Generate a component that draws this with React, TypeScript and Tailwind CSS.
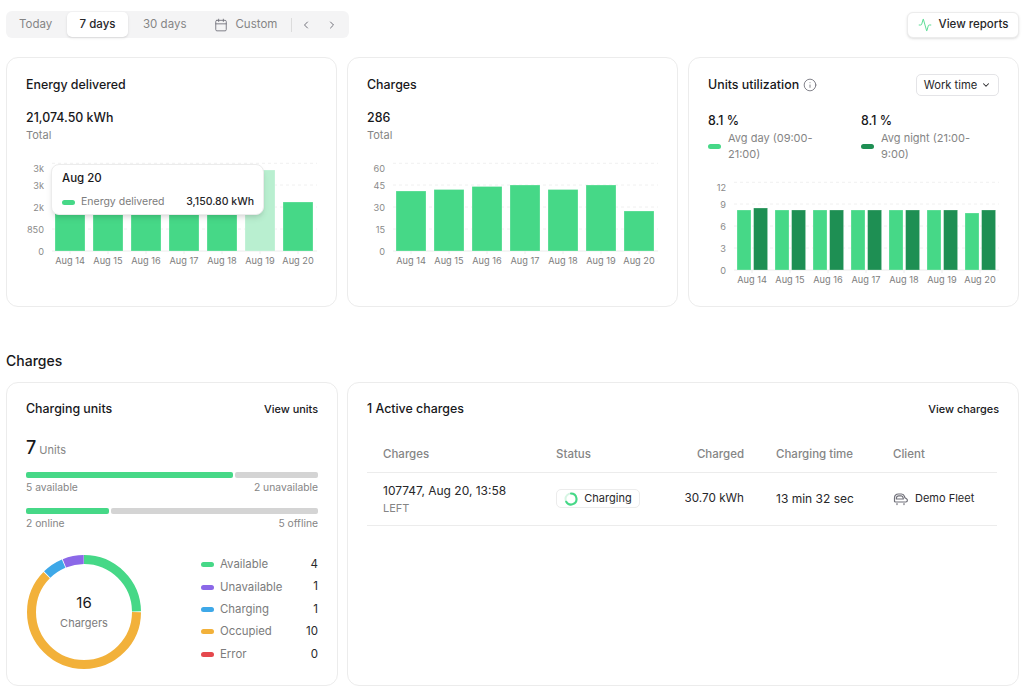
import { Activity, Calendar, ChevronDown, ChevronLeft, ChevronRight, Info } from "lucide-react";
import type { ReactNode } from "react";

const GREEN = "#46d887";
const DARK = "#1e8f53";
const DAYS = ["Aug 14", "Aug 15", "Aug 16", "Aug 17", "Aug 18", "Aug 19", "Aug 20"];

type Bar = { x: number; w: number; top: number; fill: string };

function Chart({ ticks, bars }: { ticks: string[]; bars: Bar[] }) {
  const grid = [3.3, 25, 47, 69, 91];
  return (
    <svg width="291" height="110" className="block">
      {grid.map((y, i) => (
        <line key={y} x1="26" x2="291" y1={y} y2={y} stroke={i === 4 ? "#ececec" : "#f0f0f0"} strokeDasharray={i === 4 ? undefined : "3 3"} />
      ))}
      {ticks.map((t, i) => (
        <text key={i} x="18" y={(i === 0 ? 8.5 : grid[i]) + 3.5} textAnchor="end" fontSize="9.2" fill="#8a8a8a">
          {t}
        </text>
      ))}
      {bars.map((b, i) => (
        <rect key={i} x={b.x} y={b.top} width={b.w} height={91 - b.top} fill={b.fill} stroke="#ffffff" strokeOpacity="0.5" strokeWidth="0.5" />
      ))}
      {DAYS.map((d, i) => (
        <g key={d}>
          <line x1={44 + i * 38} x2={44 + i * 38} y1="91" y2="94" stroke="#ececec" />
          <text x={44 + i * 38} y="103.5" textAnchor="middle" fontSize="9.2" fill="#7e7e7e">
            {d}
          </text>
        </g>
      ))}
    </svg>
  );
}

function single(tops: number[], light?: number): Bar[] {
  return tops.map((top, i) => ({ x: 29 + i * 38, w: 30, top, fill: i === light ? "#b9efd0" : GREEN }));
}

function double(day: number[], night: number[]): Bar[] {
  return day.flatMap((top, i) => [
    { x: 29 + i * 38, w: 14, top, fill: GREEN },
    { x: 45.6 + i * 38, w: 14, top: night[i], fill: DARK },
  ]);
}

function Card({ className, children }: { className: string; children: ReactNode }) {
  return <section className={`rounded-xl border border-[#ececec] bg-white px-[19px] pt-4 ${className}`}>{children}</section>;
}

function Swatch({ color }: { color: string }) {
  return <span className="block h-[5px] w-[13px] shrink-0 rounded-full" style={{ backgroundColor: color }} />;
}

function Split({ left, right, a, b, mt }: { left: string; right: string; a: number; b: number; mt: string }) {
  return (
    <div className={mt}>
      <div className="flex gap-[2px]">
        <div className="h-[6px] rounded-[2px] bg-[#46d887]" style={{ width: a }} />
        <div className="h-[6px] rounded-[2px] bg-[#d4d4d4]" style={{ width: b }} />
      </div>
      <div className="mt-[2px] flex justify-between text-[10.3px] leading-[14px] text-[#858585]">
        <span>{left}</span>
        <span>{right}</span>
      </div>
    </div>
  );
}

function Donut() {
  const r = 52.5;
  const c = 2 * Math.PI * r;
  const segs = [
    { n: 4, color: GREEN },
    { n: 10, color: "#f2b13a" },
    { n: 1, color: "#3ea8e8" },
    { n: 1, color: "#8b68e8" },
  ];
  let done = 0;
  return (
    <svg width="116" height="116" className="block">
      <g transform="rotate(-90 58 58)">
        {segs.map((s) => {
          const len = (s.n / 16) * c;
          const el = (
            <circle key={s.color} cx="58" cy="58" r={r} fill="none" stroke={s.color} strokeWidth="9" strokeDasharray={`${len - 0.8} ${c - len + 0.8}`} strokeDashoffset={-done} />
          );
          done += len;
          return el;
        })}
      </g>
    </svg>
  );
}

function Legend({ color, label, value }: { color: string; label: string; value: number }) {
  return (
    <div className="flex h-[22.4px] items-center">
      <Swatch color={color} />
      <span className="ml-[6px] text-[11.4px] text-[#7c7c7c]">{label}</span>
      <span className="ml-auto text-[11.5px] text-[#27272a]">{value}</span>
    </div>
  );
}

// rounded van outline next to the client name
function CarIcon() {
  return (
    <svg width="16" height="16" viewBox="0 0 16 16" fill="none" stroke="#71717a" strokeWidth="1.2" strokeLinecap="round" strokeLinejoin="round">
      <path d="M1.5 10.5V7c0-2.5 1.5-4 4-4h3c1.5 0 2.5 1 3 2.5l.4 1.3 1.6 1c.6.4.9 1 .9 1.5 0 .9-.6 1.7-1.6 1.7H2.7c-.7 0-1.2-.5-1.2-1z" />
      <path d="M3.4 8V7c0-1.3 1-2.2 2.3-2.2h2.7c.9 0 1.5.6 1.8 2.2l.1 1z" />
      <path d="M4 12.6v1M11 12.6v1" />
    </svg>
  );
}

function Spinner() {
  return (
    <svg width="14" height="14" viewBox="0 0 14 14" fill="none" strokeWidth="2">
      <circle cx="7" cy="7" r="5.5" stroke="#d5f5e3" />
      <path d="M7 1.5A5.5 5.5 0 1 1 2.2 9.7" stroke={GREEN} strokeLinecap="round" />
    </svg>
  );
}

export default function App() {
  return (
    <div className="min-h-screen bg-white pl-[6px] pr-[5px] pt-[11px] font-['Inter',sans-serif] text-[#18181b]">
      {/* Period filter */}
      <div className="flex items-center justify-between">
        <div className="flex h-[27px] w-[343px] items-center rounded-md bg-[#f4f4f5] pl-[1px] text-[11.5px] text-[#858585]">
          <span className="ml-3 w-[48px]">Today</span>
          <span className="flex h-[25px] w-[61px] items-center justify-center rounded-[5px] bg-white font-medium text-[#27272a] shadow-sm">7 days</span>
          <span className="ml-[15px]">30 days</span>
          <Calendar className="ml-[28px] h-[14px] w-[14px] text-[#71717a]" strokeWidth={1.5} />
          <span className="ml-[7px]">Custom</span>
          <span className="ml-[14px] h-[14px] w-px bg-[#dcdcdc]" />
          <ChevronLeft className="ml-[8px] h-3 w-3 text-[#71717a]" />
          <ChevronRight className="ml-[14px] h-3 w-3 text-[#71717a]" />
        </div>
        <button className="flex h-[26px] w-[112px] items-center justify-center gap-[7px] rounded-md border border-[#ececec] bg-white text-[11.5px] font-medium text-[#27272a] shadow-sm">
          <Activity className="h-[14px] w-[14px] text-[#46d887]" strokeWidth={1.5} />
          View reports
        </button>
      </div>

      {/* Stats */}
      <div className="mt-[19px] grid grid-cols-[331px_331px_331px] gap-[10px]">
        <Card className="h-[250px]">
          <h2 className="mt-px text-[12.4px] font-medium leading-5">Energy delivered</h2>
          <p className="mt-[13px] text-[12.4px] font-medium leading-5">21,074.50 kWh</p>
          <p className="-mt-px text-[11px] leading-4 text-[#858585]">Total</p>
          <div className="relative mt-[17px]">
            <Chart ticks={["3k", "3k", "2k", "850", "0"]} bars={single([28, 28, 28, 28, 28, 10, 42], 5)} />
            <div className="absolute left-[25px] top-[4px] h-[51px] w-[213px] rounded-lg border border-[#ececec] bg-white pl-[10px] pr-[9px] pt-[3px] shadow-md">
              <p className="text-[11.5px] font-medium leading-5">Aug 20</p>
              <div className="mt-[6px] flex items-center text-[10.5px] leading-4">
                <Swatch color={GREEN} />
                <span className="ml-[6px] text-[#7c7c7c]">Energy delivered</span>
                <span className="ml-auto font-medium text-[#27272a]">3,150.80 kWh</span>
              </div>
            </div>
          </div>
        </Card>
        <Card className="h-[250px]">
          <h2 className="mt-px text-[12.4px] font-medium leading-5">Charges</h2>
          <p className="mt-[13px] text-[12.4px] font-medium leading-5">286</p>
          <p className="-mt-px text-[11px] leading-4 text-[#858585]">Total</p>
          <div className="mt-[17px]">
            <Chart ticks={["60", "45", "30", "15", "0"]} bars={single([31, 29.5, 26.5, 25, 29.5, 25, 51])} />
          </div>
        </Card>
        <Card className="h-[250px]">
          <div className="flex h-[22px] items-center">
            <h2 className="text-[12.4px] font-medium leading-5">Units utilization</h2>
            <Info className="ml-[4px] h-[14px] w-[14px] text-[#71717a]" strokeWidth={1.5} />
            <button className="ml-auto flex h-[22px] w-[83px] items-center justify-center gap-1 rounded-[5px] border border-[#e4e4e7] text-[11.2px] text-[#27272a]">
              Work time
              <ChevronDown className="h-[10px] w-[10px]" strokeWidth={2.5} />
            </button>
          </div>
          <div className="mt-[15px] grid grid-cols-[153px_130px]">
            {["Avg day (09:00-21:00)", "Avg night (21:00-9:00)"].map((label, i) => (
              <div key={label}>
                <p className="text-[12.4px] font-medium leading-5">8.1 %</p>
                <div className="-mt-px flex items-center gap-[7px]">
                  <Swatch color={i === 0 ? GREEN : DARK} />
                  <span className="w-[98px] text-[11px] leading-4 text-[#858585]">{label}</span>
                </div>
              </div>
            ))}
          </div>
          <div className="mt-[17px]">
            <Chart ticks={["12", "9", "6", "3", "0"]} bars={double([31, 31, 31, 31, 31, 31, 34], [29, 31, 31, 31, 31, 31, 31])} />
          </div>
        </Card>
      </div>

      <h2 className="mt-[43px] text-[14px] font-medium leading-[22px]">Charges</h2>

      {/* Charges */}
      <div className="mt-[10px] grid grid-cols-[332px_672px] gap-[9px]">
        <Card className="h-[304px]">
          <div className="flex h-5 items-center justify-between">
            <h2 className="text-[12.4px] font-medium">Charging units</h2>
            <a className="text-[10.9px] font-medium">View units</a>
          </div>
          <div className="mt-[17px] flex items-baseline gap-[3px]">
            <span className="text-[18px] font-medium leading-6">7</span>
            <span className="text-[11px] text-[#858585]">Units</span>
          </div>
          <Split mt="mt-[12px]" left="5 available" right="2 unavailable" a={207} b={83} />
          <Split mt="mt-[14px]" left="2 online" right="5 offline" a={83} b={207} />
          <div className="mt-[24px] flex items-center">
            <div className="relative">
              <Donut />
              <div className="absolute inset-0 flex flex-col items-center justify-center">
                <span className="text-[15px] leading-5">16</span>
                <span className="mt-[2px] text-[11px] leading-4 text-[#7c7c7c]">Chargers</span>
              </div>
            </div>
            <div className="ml-[59px] -mt-[5px] flex-1">
              <Legend color={GREEN} label="Available" value={4} />
              <Legend color="#8b68e8" label="Unavailable" value={1} />
              <Legend color="#3ea8e8" label="Charging" value={1} />
              <Legend color="#f2b13a" label="Occupied" value={10} />
              <Legend color="#e5484d" label="Error" value={0} />
            </div>
          </div>
        </Card>
        <Card className="h-[304px]">
          <div className="flex h-5 items-center justify-between">
            <h2 className="text-[12.4px] font-medium">1 Active charges</h2>
            <a className="text-[10.9px] font-medium">View charges</a>
          </div>
          <table className="mt-[17px] w-[630px] table-fixed text-left">
            <colgroup>
              <col className="w-[173px]" />
              <col className="w-[120px]" />
              <col className="w-[100px]" />
              <col className="w-[117px]" />
              <col className="w-[120px]" />
            </colgroup>
            <thead>
              <tr className="h-[36px] border-b border-[#ececec] text-[11.5px] font-medium text-[#858585]">
                <th className="px-4 pt-[2px] font-medium">Charges</th>
                <th className="px-4 pt-[2px] font-medium">Status</th>
                <th className="px-4 pt-[2px] text-right font-medium">Charged</th>
                <th className="px-4 pt-[2px] font-medium">Charging time</th>
                <th className="px-4 pt-[2px] font-medium">Client</th>
              </tr>
            </thead>
            <tbody>
              <tr className="h-[53px] border-b border-[#ececec] text-[12px] text-[#27272a]">
                <td className="px-4">
                  <p className="leading-[18px]">107747, Aug 20, 13:58</p>
                  <p className="text-[11px] leading-4 text-[#858585]">LEFT</p>
                </td>
                <td className="px-4">
                  <span className="flex h-[19px] w-[84px] items-center justify-center gap-[6px] rounded-[5px] border border-[#ececec] text-[11px]">
                    <Spinner />
                    Charging
                  </span>
                </td>
                <td className="px-4 text-right text-[11.7px]">30.70 kWh</td>
                <td className="px-4">13 min 32 sec</td>
                <td className="px-4">
                  <span className="flex items-center gap-[6px] text-[11px]">
                    <CarIcon />
                    Demo Fleet
                  </span>
                </td>
              </tr>
            </tbody>
          </table>
        </Card>
      </div>
    </div>
  );
}
